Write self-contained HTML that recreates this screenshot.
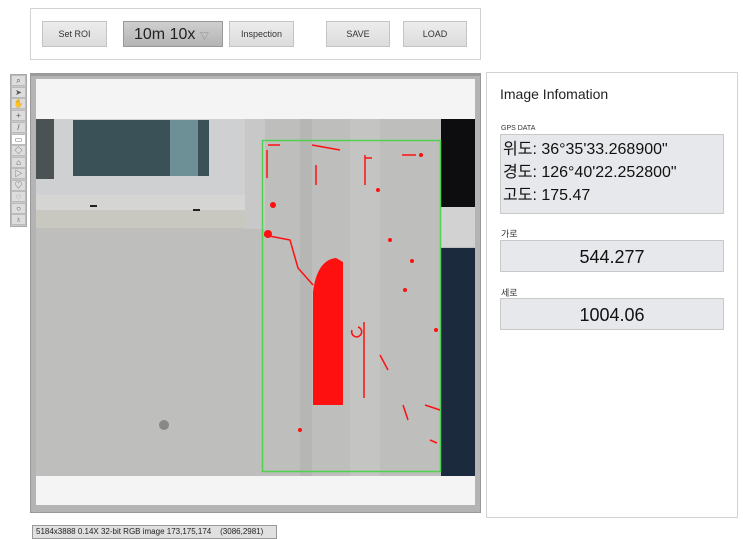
<!DOCTYPE html>
<html><head><meta charset="utf-8"><style>
*{margin:0;padding:0;box-sizing:border-box}
body{width:743px;height:537px;background:#fff;position:relative;overflow:hidden;font-family:"Liberation Sans","Noto Sans CJK KR",sans-serif}
.abs{position:absolute}
.btn{position:absolute;top:21px;height:26px;background:linear-gradient(#ececec,#dcdcdc);border:1px solid #c4c4c4;font-size:9px;color:#333;text-align:center;line-height:24px}
.tb{position:absolute;left:11px;width:15px;height:11px;background:#ddd;border:1px solid #bbb;font-size:8px;text-align:center;line-height:9px;color:#555}
.box{position:absolute;left:500px;width:224px;background:#e6e8eb;border:1px solid #c8c8c8;color:#111}
.lbl{position:absolute;left:501px;font-size:9px;color:#333}
</style></head><body>
<div class="abs" style="left:30px;top:8px;width:451px;height:52px;border:1px solid #d2d2d2"></div>
<div class="btn" style="left:42px;width:65px">Set ROI</div>
<div class="abs" style="left:123px;top:21px;width:100px;height:26px;background:linear-gradient(#cfcfcf,#b4b4b4);border:1px solid #999;font-size:16px;line-height:25px;padding-left:10px;color:#222">10m 10x <span style="font-size:9px;color:#888">▽</span></div>
<div class="btn" style="left:229px;width:65px">Inspection</div>
<div class="btn" style="left:326px;width:64px">SAVE</div>
<div class="btn" style="left:403px;width:64px">LOAD</div>

<div class="abs" style="left:10px;top:74px;width:17px;height:153px;background:#c8c8c8;border:1px solid #aaa"></div>
<div class="tb" style="top:75px">⌕</div><div class="tb" style="top:87px">➤</div><div class="tb" style="top:98px">✋</div><div class="tb" style="top:110px">+</div><div class="tb" style="top:122px">/</div><div class="tb" style="top:134px;background:#fff">▭</div><div class="tb" style="top:145px">◇</div><div class="tb" style="top:157px">⌂</div><div class="tb" style="top:168px">▷</div><div class="tb" style="top:180px">♡</div><div class="tb" style="top:191px">◌</div><div class="tb" style="top:203px">○</div><div class="tb" style="top:214px">♁</div>

<div class="abs" style="left:30px;top:73px;width:451px;height:440px;background:#b4b4b4;border:1px solid #999;border-top:3px solid #9a9a9a"></div>
<div class="abs" style="left:36px;top:79px;width:439px;height:426px;background:#f4f4f4"></div>
<svg class="abs" style="left:36px;top:119px" width="439" height="357" viewBox="36 119 439 357">
<rect x="36" y="119" width="439" height="357" fill="#bebebc"/>
<rect x="36" y="119" width="210" height="108" fill="#cfd0d2"/>
<rect x="36" y="119" width="18" height="60" fill="#4b5254"/>
<rect x="73" y="120" width="136" height="56" fill="#3a5157"/>
<rect x="170" y="120" width="28" height="56" fill="#6d9097"/>
<rect x="36" y="195" width="210" height="32" fill="#d5d5d3"/>
<rect x="36" y="210" width="228" height="18" fill="#c9c8c0"/>
<rect x="90" y="205" width="7" height="2" fill="#222"/><rect x="193" y="209" width="7" height="2" fill="#222"/>
<rect x="245" y="119" width="20" height="110" fill="#c8c8c8"/>
<rect x="300" y="119" width="12" height="357" fill="#b6b6b4"/>
<rect x="350" y="119" width="30" height="357" fill="#c4c4c2"/>
<circle cx="164" cy="425" r="5" fill="#888"/>
<rect x="441" y="119" width="34" height="88" fill="#0d0d0f"/>
<rect x="441" y="207" width="34" height="40" fill="#d2d2d2"/>
<rect x="441" y="248" width="34" height="228" fill="#1c2a3d"/>
<rect x="262.5" y="140.5" width="178" height="331" fill="none" stroke="#4fd24f" stroke-width="1.5"/>
<path d="M313 405 V292 Q317 260 336 258 L343 262 V405 Z" fill="#ff1010"/>
<g stroke="#ff1010" stroke-width="1.5" fill="none">
<path d="M264 235 L290 240 L298 268 L313 285"/>
<path d="M267 150 V178 M268 145 H280 M312 145 L340 150 M316 165 V185 M365 155 V185 M365 158 H372 M364 322 V398 M402 155 H416 M380 355 L388 370 M403 405 L408 420 M425 405 L440 410 M430 440 L437 443"/>
<path d="M352 330 a5 5 0 1 0 6 -3"/>
</g>
<g fill="#ff1010"><circle cx="268" cy="234" r="4"/><circle cx="273" cy="205" r="3"/><circle cx="421" cy="155" r="2"/><circle cx="378" cy="190" r="2"/><circle cx="412" cy="261" r="2"/><circle cx="405" cy="290" r="2"/><circle cx="436" cy="330" r="2"/><circle cx="300" cy="430" r="2"/><circle cx="390" cy="240" r="2"/></g>
</svg>
<div class="abs" style="left:32px;top:525px;width:245px;height:14px;background:#e0e0e0;border:1px solid #999;font-size:8px;line-height:12px;padding-left:3px;color:#222;white-space:nowrap">5184x3888 0.14X 32-bit RGB image 173,175,174 &nbsp;&nbsp;&nbsp;(3086,2981)</div>

<div class="abs" style="left:486px;top:72px;width:252px;height:446px;border:1px solid #d2d2d2"></div>
<div class="abs" style="left:500px;top:86px;font-size:14px;color:#222">Image Infomation</div>
<div class="lbl" style="top:125px;font-size:7px">GPS DATA</div>
<div class="box" style="top:134px;height:80px;font-size:16px;line-height:23px;padding:3px 0 0 2px">위도: 36°35'33.268900"<br>경도: 126°40'22.252800"<br>고도: 175.47</div>
<div class="lbl" style="top:227px">가로</div>
<div class="box" style="top:240px;height:32px;font-size:18px;text-align:center;line-height:32px">544.277</div>
<div class="lbl" style="top:286px">세로</div>
<div class="box" style="top:298px;height:32px;font-size:18px;text-align:center;line-height:32px">1004.06</div>
</body></html>
